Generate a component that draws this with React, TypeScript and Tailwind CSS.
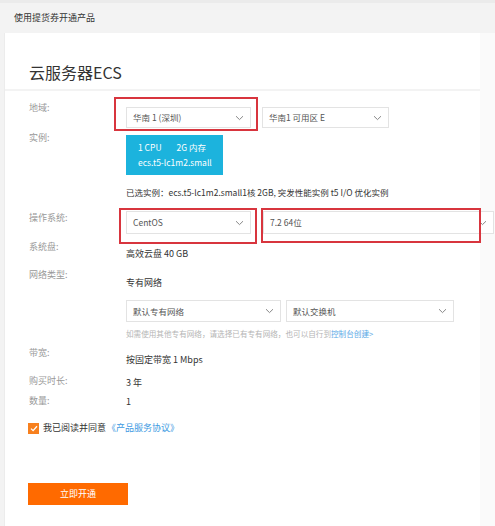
import React from "react";

const Chevron = () => (
  <svg width="9" height="6" viewBox="0 0 9 6" className="shrink-0">
    <path d="M1 1.2 L4.5 4.6 L8 1.2" fill="none" stroke="#888" strokeWidth="1" />
  </svg>
);

const Select = ({ text, w, cls = "" }: { text: string; w: string; cls?: string }) => (
  <div
    className={`${w} ${cls} border border-[#e3e3e3] bg-white flex items-center justify-between pl-[6px] pr-[6px] text-[8.5px] text-[#555] shrink-0`}
  >
    <span>{text}</span>
    <Chevron />
  </div>
);

const Label = ({ children, mt = "" }: { children: React.ReactNode; mt?: string }) => (
  <div className={`w-[121px] pl-[24px] text-[9px] leading-[14px] text-[#999] shrink-0 ${mt}`}>{children}</div>
);

export default function App() {
  return (
    <div className="w-[495px] h-[526px] bg-[#f3f3f3] overflow-hidden font-['Noto_Sans_CJK_SC',sans-serif]">
      <div className="h-[33px] border-t-[3px] border-[#ebebeb] flex items-center pl-[14px] text-[9px] text-[#333]">
        使用提货券开通产品
      </div>
      <div className="ml-[4px] h-[493px] bg-white flex border-l border-[#ececec]">
        <div className="w-[475px] shrink-0">
          <div className="h-[56px] pl-[24px] pt-[29px] text-[16px] leading-[20px] text-[#333]">云服务器ECS</div>
          <div className="h-[2px] bg-[#f3f3f3]" />
          <div className="pt-[10px]">
            {/* 地域 */}
            <div className="flex">
              <Label>地域:</Label>
              <div className="relative mt-[6px] flex gap-[11px]">
                <Select text="华南 1 (深圳)" w="w-[125px]" cls="h-[21px]" />
                <Select text="华南1 可用区 E" w="w-[127px]" cls="h-[21px]" />
                <div className="absolute left-[-12px] top-[-10px] w-[144px] h-[34px] border-2 border-[#d8353e]" />
              </div>
            </div>
            {/* 实例 */}
            <div className="flex mt-[3px]">
              <Label>实例:</Label>
              <div className="mt-[4px] flex flex-col">
                <div className="w-[97px] h-[40px] bg-[#1cb3dd] text-white text-[8.5px] leading-[15px] flex flex-col justify-center pl-[12px]">
                  <div className="flex gap-[15px]">
                    <span>1 CPU</span>
                    <span>2G 内存</span>
                  </div>
                  <div>ecs.t5-lc1m2.small</div>
                </div>
                <div className="mt-[10px] text-[8.5px] leading-[14px] text-[#333] whitespace-nowrap">
                  已选实例：ecs.t5-lc1m2.small1核 2GB, 突发性能实例 t5 I/O 优化实例
                </div>
              </div>
            </div>
            {/* 操作系统 */}
            <div className="flex mt-[12px]">
              <Label>操作系统:</Label>
              <div className="relative flex">
                <Select text="CentOS" w="w-[125px]" cls="h-[23px]" />
                <Select text="7.2 64位" w="w-[231px]" cls="h-[23px] ml-[12px]" />
                <div className="absolute left-[-7px] top-[-3px] w-[138px] h-[36px] border-2 border-[#d8353e]" />
                <div className="absolute left-[135px] top-[-3px] w-[220px] h-[35px] border-2 border-[#d8353e]" />
              </div>
            </div>
            {/* 系统盘 */}
            <div className="flex mt-[6px]">
              <Label>系统盘:</Label>
              <div className="mt-[7px] text-[9px] leading-[14px] text-[#333]">高效云盘 40 GB</div>
            </div>
            {/* 网络类型 */}
            <div className="flex mt-[7px]">
              <Label>网络类型:</Label>
              <div className="flex flex-col">
                <div className="mt-[8px] text-[9px] leading-[14px] text-[#333]">专有网络</div>
                <div className="mt-[10px] flex gap-[5px]">
                  <Select text="默认专有网络" w="w-[155px]" cls="h-[22px]" />
                  <Select text="默认交换机" w="w-[168px]" cls="h-[22px]" />
                </div>
                <div className="mt-[5px] text-[7.6px] leading-[14px] text-[#b5b5b5] whitespace-nowrap">
                  如需使用其他专有网络，请选择已有专有网络，也可以自行到
                  <span className="text-[#5aa9e6]">控制台创建&gt;</span>
                </div>
              </div>
            </div>
            {/* 带宽 */}
            <div className="flex mt-[5px]">
              <Label>带宽:</Label>
              <div className="mt-[7px] text-[9px] leading-[14px] text-[#333]">按固定带宽 1 Mbps</div>
            </div>
            {/* 购买时长 */}
            <div className="flex mt-[7px]">
              <Label>购买时长:</Label>
              <div className="mt-[2px] text-[9px] leading-[14px] text-[#333]">3 年</div>
            </div>
            {/* 数量 */}
            <div className="flex mt-[4px]">
              <Label>数量:</Label>
              <div className="mt-[1px] text-[9px] leading-[14px] text-[#333]">1</div>
            </div>
            {/* 协议 */}
            <div className="mt-[12px] pl-[23px] flex items-center gap-[4px] text-[9px] leading-[14px]">
              <div className="w-[11px] h-[11px] bg-[#f7801e] flex items-center justify-center">
                <svg width="8" height="7" viewBox="0 0 8 7">
                  <path d="M1 3.6 L3.1 5.6 L7 1.2" fill="none" stroke="white" strokeWidth="1.3" />
                </svg>
              </div>
              <span className="text-[#333]">我已阅读并同意</span>
              <span className="text-[#3d9ae2] -ml-[3px]">《产品服务协议》</span>
            </div>
            {/* 按钮 */}
            <div className="mt-[48px] pl-[23px]">
              <div className="w-[100px] h-[22px] bg-[#ff6a00] text-white text-[9px] flex items-center justify-center">
                立即开通
              </div>
            </div>
          </div>
        </div>
        <div className="flex-1 bg-[#fafafa]" />
      </div>
    </div>
  );
}
